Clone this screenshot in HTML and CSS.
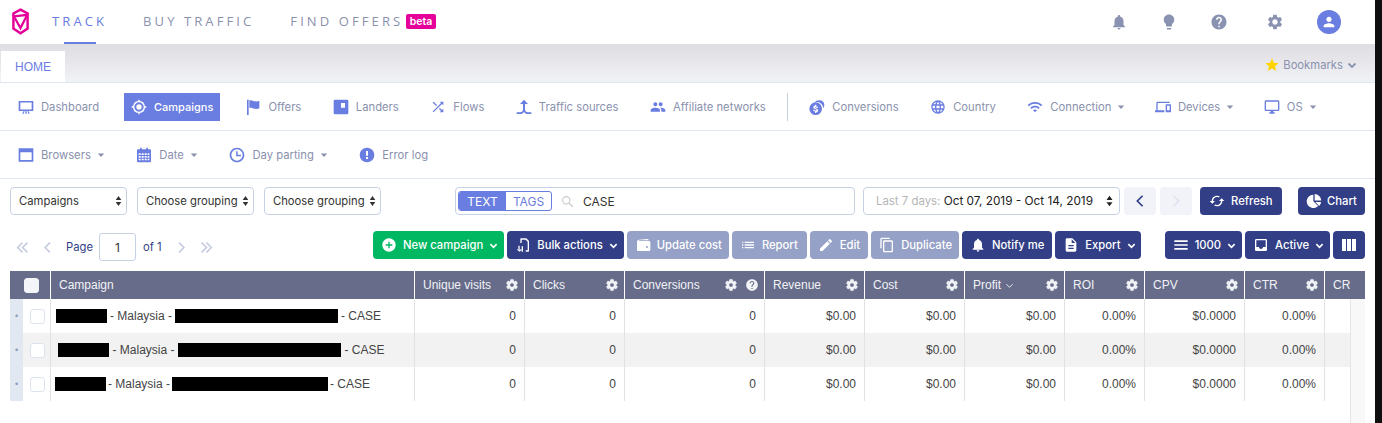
FILE: index.html
```html
<!DOCTYPE html>
<html lang="en">
<head>
<meta charset="utf-8">
<title>Campaigns</title>
<link rel="stylesheet" href="styles.css">
</head>
<body>
<svg class="sprite" width="0" height="0" aria-hidden="true">
<symbol id="i-gear" viewBox="0 0 24 24"><path d="M19.14 12.94c.04-.3.06-.61.06-.94 0-.32-.02-.64-.07-.94l2.03-1.58c.18-.14.23-.41.12-.61l-1.92-3.32c-.12-.22-.37-.29-.59-.22l-2.39.96c-.5-.38-1.03-.7-1.62-.94l-.36-2.54c-.04-.24-.24-.41-.48-.41h-3.84c-.24 0-.43.17-.47.41l-.36 2.54c-.59.24-1.13.57-1.62.94l-2.39-.96c-.22-.08-.47 0-.59.22L2.74 8.87c-.12.21-.08.47.12.61l2.03 1.58c-.05.3-.09.63-.09.94s.02.64.07.94l-2.03 1.58c-.18.14-.23.41-.12.61l1.92 3.32c.12.22.37.29.59.22l2.39-.96c.5.38 1.03.7 1.62.94l.36 2.54c.05.24.24.41.48.41h3.84c.24 0 .44-.17.47-.41l.36-2.54c.59-.24 1.13-.56 1.62-.94l2.39.96c.22.08.47 0 .59-.22l1.92-3.32c.12-.22.07-.47-.12-.61l-2.01-1.58zM12 15.6c-1.98 0-3.6-1.62-3.6-3.6s1.62-3.6 3.6-3.6 3.6 1.62 3.6 3.6-1.62 3.6-3.6 3.6z"/></symbol>
<symbol id="i-bell" viewBox="0 0 24 24"><path d="M12 22c1.1 0 2-.9 2-2h-4c0 1.1.89 2 2 2zm6-6v-5c0-3.07-1.64-5.64-4.5-6.32V4c0-.83-.67-1.5-1.5-1.5s-1.5.67-1.5 1.5v.68C7.63 5.36 6 7.92 6 11v5l-2 2v1h16v-1l-2-2z"/></symbol>
<symbol id="i-help" viewBox="0 0 24 24"><path d="M12 2C6.48 2 2 6.48 2 12s4.48 10 10 10 10-4.48 10-10S17.52 2 12 2zm1 17h-2v-2h2v2zm2.07-7.75l-.9.92C13.45 12.9 13 13.5 13 15h-2v-.5c0-1.1.45-2.1 1.17-2.83l1.24-1.26c.37-.36.59-.86.59-1.41 0-1.1-.9-2-2-2s-2 .9-2 2H8c0-2.21 1.79-4 4-4s4 1.79 4 4c0 .88-.36 1.68-.93 2.25z"/></symbol>
<symbol id="i-caret" viewBox="0 0 10 10"><path d="M1 3h8L5 7.500z"/></symbol>
<symbol id="i-chev" viewBox="0 0 10 10"><path d="M1.500 3.500L5 7l3.500-3.500" fill="none" stroke="currentColor" stroke-width="1.800"/></symbol>
<symbol id="i-updown" viewBox="0 0 10 16"><path d="M5 1l4 5.500H1zM5 15L1 9.500h8z"/></symbol>
</svg>
<div class="page">
<main class="main">
  <header class="topbar">
    <svg class="logo" viewBox="0 0 18 28"><path d="M9 1.500L16.500 5.500V21.500L9 26.500L1.500 21.500V5.500Z" fill="none" stroke="#e5009a" stroke-width="2.600"/><path d="M2 8.500L16 7L9 21Z" fill="none" stroke="#e5009a" stroke-width="2.400"/></svg>
    <nav class="topnav">
      <a class="topnav-item is-active">TRACK</a>
      <a class="topnav-item">BUY TRAFFIC</a>
      <a class="topnav-item">FIND OFFERS<span class="beta">beta</span></a>
    </nav>
    <div class="top-icons">
      <svg class="top-icon"><use href="#i-bell"/></svg>
      <svg class="top-icon" viewBox="0 0 24 24"><path d="M9 21c0 .55.45 1 1 1h4c.55 0 1-.45 1-1v-1H9v1zm3-19C8.140 2 5 5.140 5 9c0 2.380 1.190 4.470 3 5.740V17c0 .55.45 1 1 1h6c.55 0 1-.45 1-1v-2.260c1.810-1.270 3-3.360 3-5.740 0-3.860-3.140-7-7-7z"/></svg>
      <svg class="top-icon top-icon-wide"><use href="#i-help"/></svg>
      <svg class="top-icon"><use href="#i-gear"/></svg>
      <span class="avatar"><svg viewBox="0 0 24 24"><path d="M12 12c2.210 0 4-1.790 4-4s-1.790-4-4-4-4 1.790-4 4 1.790 4 4 4zm0 2c-2.670 0-8 1.340-8 4v2h16v-2c0-2.660-5.330-4-8-4z"/></svg></span>
    </div>
  </header>

  <div class="tabbar">
    <div class="tab">HOME</div>
    <div class="bookmarks">
      <svg class="star" viewBox="0 0 24 24"><path d="M12 17.270L18.180 21l-1.640-7.030L22 9.240l-7.190-.61L12 2 9.190 8.630 2 9.240l5.460 4.730L5.820 21z"/></svg>
      <span>Bookmarks</span>
      <svg class="bm-chev"><use href="#i-chev"/></svg>
    </div>
  </div>

  <nav class="menu-row">
    <a class="menu-item menu-first"><svg class="mi" viewBox="0 0 24 24"><path d="M1 3h22v15H1zm2.500 2.300v10.400h17V5.300zM8 18.500h2L8.500 22H6.500zM16 18.500h-2l1.500 3.500h2zM11 18.500h2V22h-2z"/></svg>Dashboard</a>
    <a class="menu-item is-current"><svg class="mi" viewBox="0 0 24 24"><path d="M12 8a4 4 0 1 0 0 8 4 4 0 0 0 0-8zm8.940 3A8.994 8.994 0 0 0 13 3.060V1h-2v2.060A8.994 8.994 0 0 0 3.060 11H1v2h2.060A8.994 8.994 0 0 0 11 20.940V23h2v-2.060A8.994 8.994 0 0 0 20.940 13H23v-2h-2.060zM12 19a7 7 0 1 1 0-14 7 7 0 0 1 0 14z"/></svg>Campaigns</a>
    <a class="menu-item"><svg class="mi" viewBox="0 0 24 24"><path d="M3 1h2.500v23H3zM6.500 2C10 1 12 3 15 3.500c2.500.4 4.500 0 6.500-.8V14c-2 1-4.500 1.300-7 .8-3-.6-5-2.300-8-1.300z"/></svg>Offers</a>
    <a class="menu-item"><svg class="mi" viewBox="0 0 24 24"><path fill-rule="evenodd" d="M3 1h18a2 2 0 0 1 2 2v18a2 2 0 0 1-2 2H3a2 2 0 0 1-2-2V3a2 2 0 0 1 2-2zm9 5v7h6V6z"/></svg>Landers</a>
    <a class="menu-item"><svg class="mi" viewBox="0 0 24 24"><path d="M10.590 9.170L5.410 4 4 5.410l5.170 5.170 1.420-1.410zM14.500 4l2.040 2.040L4 18.590 5.410 20 17.960 7.460 20 9.500V4h-5.500zm.33 9.410l-1.410 1.410 3.130 3.130L14.500 20H20v-5.500l-2.040 2.040-3.130-3.130z"/></svg>Flows</a>
    <a class="menu-item"><svg class="mi" viewBox="0 0 24 24"><path d="M12 1l6 6.500h-4.500V15c0 3 2 5 4.500 5H23v2.500h-5c-2.500 0-5-1.500-6-3.500-1 2-3.500 3.500-6 3.500H1V20h5.500c2.500 0 4-2 4-5V7.500H6z"/></svg>Traffic sources</a>
    <a class="menu-item"><svg class="mi" viewBox="0 0 24 24"><path d="M16 11c1.660 0 2.990-1.340 2.990-3S17.660 5 16 5c-1.660 0-3 1.340-3 3s1.340 3 3 3zm-8 0c1.660 0 2.990-1.340 2.990-3S9.660 5 8 5C6.340 5 5 6.340 5 8s1.340 3 3 3zm0 2c-2.330 0-7 1.170-7 3.500V19h14v-2.500c0-2.330-4.670-3.500-7-3.500zm8 0c-.29 0-.62.02-.97.05 1.160.84 1.970 1.970 1.970 3.450V19h6v-2.500c0-2.330-4.670-3.500-7-3.500z"/></svg>Affiliate networks</a>
    <span class="menu-divider"></span>
    <a class="menu-item"><svg class="mi" viewBox="0 0 24 24"><path d="M15 2a9 9 0 0 0-7 3.400A9 9 0 0 1 21 14a9 9 0 0 0 2-5.500A7 7 0 0 0 15 2z"/><path fill-rule="evenodd" d="M10 5a9.500 9.500 0 1 1 0 19 9.500 9.500 0 0 1 0-19zm-.8 3.500v1.300c-1.700.3-2.700 1.300-2.700 2.600 0 1.600 1.300 2.200 3 2.700 1.300.4 1.800.7 1.800 1.300s-.6 1-1.500 1-1.600-.4-1.700-1.200H6.300c.1 1.500 1.200 2.400 2.900 2.700V21h1.700v-1.100c1.700-.3 2.800-1.300 2.800-2.700 0-1.700-1.300-2.300-3-2.800-1.300-.4-1.800-.6-1.800-1.200 0-.5.5-.9 1.300-.9.900 0 1.400.4 1.500 1.100h1.800c-.1-1.400-1-2.300-2.600-2.600V8.500z"/></svg>Conversions</a>
    <a class="menu-item"><svg class="mi" viewBox="0 0 24 24"><path d="M11.990 2C6.470 2 2 6.480 2 12s4.470 10 9.990 10C17.520 22 22 17.520 22 12S17.520 2 11.990 2zm6.930 6h-2.950c-.32-1.250-.78-2.450-1.380-3.560 1.840.63 3.370 1.910 4.330 3.560zM12 4.040c.83 1.200 1.480 2.530 1.910 3.960h-3.820c.43-1.430 1.080-2.760 1.910-3.960zM4.260 14C4.100 13.360 4 12.690 4 12s.1-1.360.26-2h3.380c-.08.66-.14 1.320-.14 2 0 .68.06 1.340.14 2H4.260zm.82 2h2.950c.32 1.250.78 2.450 1.380 3.560-1.840-.63-3.370-1.900-4.330-3.560zm2.950-8H5.080c.96-1.660 2.490-2.930 4.330-3.560C8.810 5.550 8.350 6.750 8.030 8zM12 19.960c-.83-1.200-1.480-2.530-1.910-3.960h3.820c-.43 1.430-1.080 2.760-1.910 3.960zM14.340 14H9.660c-.09-.66-.16-1.320-.16-2 0-.68.07-1.350.16-2h4.680c.09.65.16 1.320.16 2 0 .68-.07 1.340-.16 2zm.25 5.560c.6-1.110 1.060-2.310 1.380-3.560h2.950c-.96 1.650-2.490 2.930-4.330 3.560zM16.360 14c.08-.66.14-1.320.14-2 0-.68-.06-1.340-.14-2h3.380c.16.64.26 1.310.26 2s-.1 1.360-.26 2h-3.380z"/></svg>Country</a>
    <a class="menu-item has-caret"><svg class="mi" viewBox="0 0 24 24"><path d="M1 9l2 2c4.970-4.970 13.030-4.970 18 0l2-2C16.930 2.930 7.080 2.930 1 9zm8 8l3 3 3-3c-1.650-1.660-4.340-1.660-6 0zm-4-4l2 2c2.760-2.760 7.240-2.760 10 0l2-2C15.140 9.140 8.870 9.140 5 13z"/></svg>Connection<svg class="caret"><use href="#i-caret"/></svg></a>
    <a class="menu-item has-caret"><svg class="mi" viewBox="0 0 24 24"><path d="M4 6h18V4H4c-1.100 0-2 .9-2 2v11H0v3h14v-3H4V6zm19 2h-6c-.55 0-1 .45-1 1v10c0 .55.45 1 1 1h6c.55 0 1-.45 1-1V9c0-.55-.45-1-1-1zm-1 9h-4v-7h4v7z"/></svg>Devices<svg class="caret"><use href="#i-caret"/></svg></a>
    <a class="menu-item has-caret"><svg class="mi" viewBox="0 0 24 24"><path d="M21 2H3c-1.100 0-2 .9-2 2v12c0 1.100.9 2 2 2h7v2H8v2h8v-2h-2v-2h7c1.100 0 2-.9 2-2V4c0-1.100-.9-2-2-2zm0 14H3V4h18v12z"/></svg>OS<svg class="caret"><use href="#i-caret"/></svg></a>
  </nav>

  <nav class="menu-row menu-row-second">
    <a class="menu-item has-caret"><svg class="mi" viewBox="0 0 24 24"><path fill-rule="evenodd" d="M1 2h22v20H1zm2.500 6v11.500h17V8z"/></svg>Browsers<svg class="caret"><use href="#i-caret"/></svg></a>
    <a class="menu-item has-caret"><svg class="mi" viewBox="0 0 24 24"><path fill-rule="evenodd" d="M6 1h2.500v2.500h7V1H18v2.500h3a1.500 1.500 0 0 1 1.500 1.500v16.500A1.500 1.500 0 0 1 21 23H3a1.500 1.500 0 0 1-1.500-1.500V5A1.500 1.500 0 0 1 3 3.500h3zM4 9.500V12h3V9.500zm4.500 0V12h3V9.500zm4.500 0V12h3V9.500zm4.500 0V12H20V9.500zM4 13.500V16h3v-2.500zm4.500 0V16h3v-2.500zm4.500 0V16h3v-2.500zm4.500 0V16H20v-2.500zM4 17.500V20h3v-2.500zm4.500 0V20h3v-2.500zm4.500 0V20h3v-2.500zm4.500 0V20H20v-2.500z"/></svg>Date<svg class="caret"><use href="#i-caret"/></svg></a>
    <a class="menu-item has-caret"><svg class="mi" viewBox="0 0 24 24"><path d="M11.990 1C5.900 1 1 5.920 1 12s4.900 11 10.990 11C18.070 23 23 18.080 23 12S18.070 1 11.990 1zM12 20.500a8.500 8.500 0 1 1 0-17 8.500 8.500 0 0 1 0 17zM13 6.500h-2.300V14H18v-2.300h-5z"/></svg>Day parting<svg class="caret"><use href="#i-caret"/></svg></a>
    <a class="menu-item"><svg class="mi" viewBox="0 0 24 24"><path d="M12 1a11 11 0 1 0 0 22 11 11 0 0 0 0-22zm1.500 17h-3v-3h3zm0-5h-3V6h3z"/></svg>Error log</a>
  </nav>

  <div class="filters">
    <div class="select select-main">Campaigns<svg class="updown"><use href="#i-updown"/></svg></div>
    <div class="select">Choose grouping<svg class="updown"><use href="#i-updown"/></svg></div>
    <div class="select">Choose grouping<svg class="updown"><use href="#i-updown"/></svg></div>
    <div class="search">
      <div class="toggle"><span class="toggle-on">TEXT</span><span class="toggle-off">TAGS</span></div>
      <svg class="search-icon" viewBox="0 0 16 16"><circle cx="6.500" cy="6.500" r="4.500" fill="none" stroke="#c8c8c8" stroke-width="1.300"/><path d="M10 10l4.500 4.500" stroke="#c8c8c8" stroke-width="1.600"/></svg>
      <span class="search-text">CASE</span>
    </div>
    <div class="daterange"><span class="muted">Last 7 days:</span> Oct 07, 2019 - Oct 14, 2019<svg class="updown dark"><use href="#i-updown"/></svg></div>
    <button class="arrow"><svg viewBox="0 0 12 16"><path d="M9 2L3 8l6 6" fill="none" stroke="#323f87" stroke-width="2"/></svg></button>
    <button class="arrow"><svg viewBox="0 0 12 16"><path d="M3 2l6 6-6 6" fill="none" stroke="#dfe3ef" stroke-width="2"/></svg></button>
    <button class="btn btn-refresh"><svg class="bi" viewBox="0 0 24 24"><path d="M19 8l-4 4h3c0 3.310-2.690 6-6 6-1.010 0-1.970-.25-2.800-.7l-1.460 1.460C8.970 19.540 10.430 20 12 20c4.420 0 8-3.580 8-8h3l-4-4zM6 12c0-3.310 2.690-6 6-6 1.010 0 1.970.25 2.800.7l1.460-1.460C15.030 4.460 13.570 4 12 4c-4.420 0-8 3.580-8 8H1l4 4 4-4H6z"/></svg>Refresh</button>
    <button class="btn btn-chart"><svg class="bi" viewBox="0 0 24 24"><path d="M11 2.500v10l7.200 7A10 10 0 1 1 11 2.500zM13 1.500a10 10 0 0 1 9.800 9.800H13zM14 13.500h8.700a10 10 0 0 1-3 6.100z"/></svg>Chart</button>
  </div>

  <div class="actions">
    <div class="pager">
      <svg class="pg" viewBox="0 0 16 16"><path d="M8 2L2 8l6 6M14 2L8 8l6 6" fill="none" stroke="#c3c9e0" stroke-width="1.800"/></svg>
      <svg class="pg pg-one" viewBox="0 0 16 16"><path d="M11 2L5 8l6 6" fill="none" stroke="#c3c9e0" stroke-width="1.800"/></svg>
      <span class="pg-label">Page</span>
      <span class="pg-input">1</span>
      <span class="pg-label">of 1</span>
      <svg class="pg pg-next" viewBox="0 0 16 16"><path d="M5 2l6 6-6 6" fill="none" stroke="#c3c9e0" stroke-width="1.800"/></svg>
      <svg class="pg pg-last" viewBox="0 0 16 16"><path d="M2 2l6 6-6 6M8 2l6 6-6 6" fill="none" stroke="#c3c9e0" stroke-width="1.800"/></svg>
    </div>
    <div class="btn-group">
      <button class="btn btn-green"><svg class="bi" viewBox="0 0 24 24"><path d="M12 2C6.480 2 2 6.480 2 12s4.480 10 10 10 10-4.480 10-10S17.520 2 12 2zm5 11h-4v4h-2v-4H7v-2h4V7h2v4h4v2z"/></svg>New campaign<svg class="chev"><use href="#i-chev"/></svg></button>
      <button class="btn"><svg class="bi" viewBox="0 0 24 24"><path d="M9 2h8l4 4v15a1 1 0 0 1-1 1h-4v-2h3V7l-3-3H10v5H8V3a1 1 0 0 1 1-1zM5 13h2v7l2-2 1 1-3 3-4-3 1-1 1 2zM10 14h2v8h-2z"/></svg>Bulk actions<svg class="chev"><use href="#i-chev"/></svg></button>
      <button class="btn btn-off btn-tight"><svg class="bi" viewBox="0 0 24 24"><path d="M3 7.500C3 5.500 4.500 4.500 6 4.300L18 3c1.500-.1 2.500.7 2.600 2H6.500c-.8 0-.8 1 0 1H21c1.100 0 2 .9 2 2v11c0 1.100-.9 2-2 2H5c-1.100 0-2-.9-2-2zM18 13.500a1.500 1.500 0 1 0 0 3 1.500 1.500 0 0 0 0-3z"/></svg>Update cost</button>
      <button class="btn btn-off btn-loose"><svg class="bi" viewBox="0 0 24 24"><path d="M3 13h2v-2H3v2zm0 4h2v-2H3v2zm0-8h2V7H3v2zm4 4h14v-2H7v2zm0 4h14v-2H7v2zM7 7v2h14V7H7z"/></svg>Report</button>
      <button class="btn btn-off"><svg class="bi" viewBox="0 0 24 24"><path d="M3 17.250V21h3.750L17.810 9.940l-3.750-3.750L3 17.250zM20.710 7.040c.39-.39.39-1.020 0-1.410l-2.340-2.340c-.39-.39-1.020-.39-1.410 0l-1.830 1.830 3.750 3.750 1.830-1.830z"/></svg>Edit</button>
      <button class="btn btn-off btn-tight"><svg class="bi" viewBox="0 0 24 24"><path d="M16 1H4c-1.100 0-2 .9-2 2v14h2V3h12V1zm3 4H8c-1.100 0-2 .9-2 2v14c0 1.100.9 2 2 2h11c1.100 0 2-.9 2-2V7c0-1.100-.9-2-2-2zm0 16H8V7h11v14z"/></svg>Duplicate</button>
      <button class="btn"><svg class="bi" viewBox="0 0 24 24"><use href="#i-bell"/></svg>Notify me</button>
      <button class="btn btn-tight"><svg class="bi" viewBox="0 0 24 24"><path d="M14 2H6c-1.100 0-1.990.9-1.990 2L4 20c0 1.100.89 2 1.990 2H18c1.100 0 2-.9 2-2V8l-6-6zm2 16H8v-2h8v2zm0-4H8v-2h8v2zm-3-5V3.500L18.500 9H13z"/></svg>Export<svg class="chev"><use href="#i-chev"/></svg></button>
    </div>
    <div class="btn-group btn-group-right">
      <button class="btn"><svg class="bi" viewBox="0 0 24 24"><path d="M2 19h20v-2.400H2zm0-5.800h20v-2.400H2zM2 5v2.400h20V5z"/></svg>1000<svg class="chev"><use href="#i-chev"/></svg></button>
      <button class="btn"><svg class="bi" viewBox="0 0 24 24"><path d="M19 3H4.990c-1.110 0-1.980.89-1.980 2L3 19c0 1.100.88 2 1.990 2H19c1.100 0 2-.9 2-2V5c0-1.110-.9-2-2-2zm0 12h-4c0 1.660-1.350 3-3 3s-3-1.340-3-3H4.990V5H19v10z"/></svg>Active<svg class="chev"><use href="#i-chev"/></svg></button>
      <button class="btn btn-cols"><svg class="bi" viewBox="0 0 16 16"><path d="M1 2h4v12H1zM6 2h4v12H6zM11 2h4v12h-4z"/></svg></button>
    </div>
  </div>

  <section class="table">
    <div class="thead">
      <div class="th th-drag"></div>
      <div class="th th-check"><span class="box box-head"></span></div>
      <div class="th"><span>Campaign</span></div>
      <div class="th"><span>Unique visits</span><svg class="gear"><use href="#i-gear"/></svg></div>
      <div class="th"><span>Clicks</span><svg class="gear"><use href="#i-gear"/></svg></div>
      <div class="th"><span>Conversions</span><svg class="gear"><use href="#i-gear"/></svg><svg class="gear help"><use href="#i-help"/></svg></div>
      <div class="th"><span>Revenue</span><svg class="gear"><use href="#i-gear"/></svg></div>
      <div class="th"><span>Cost</span><svg class="gear"><use href="#i-gear"/></svg></div>
      <div class="th"><span>Profit<svg class="sort" viewBox="0 0 10 10"><path d="M1.500 3.500L5 7l3.500-3.500" fill="none" stroke="currentColor"/></svg></span><svg class="gear"><use href="#i-gear"/></svg></div>
      <div class="th"><span>ROI</span><svg class="gear"><use href="#i-gear"/></svg></div>
      <div class="th"><span>CPV</span><svg class="gear"><use href="#i-gear"/></svg></div>
      <div class="th"><span>CTR</span><svg class="gear"><use href="#i-gear"/></svg></div>
      <div class="th"><span>CR</span></div>
    </div>
    <div class="tbody">
      <div class="rows">
        <div class="tr">
          <div class="td td-drag">•</div>
          <div class="td td-check"><span class="box"></span></div>
          <div class="td td-name name-a"><span class="redact w51"></span><span>- Malaysia -</span><span class="redact w163"></span><span>- CASE</span></div>
          <div class="td">0</div><div class="td">0</div><div class="td">0</div><div class="td">$0.00</div><div class="td">$0.00</div><div class="td">$0.00</div><div class="td">0.00%</div><div class="td">$0.0000</div><div class="td">0.00%</div><div class="td"></div>
        </div>
        <div class="tr tr-alt">
          <div class="td td-drag">•</div>
          <div class="td td-check"><span class="box"></span></div>
          <div class="td td-name name-b"><span class="redact w51"></span><span>- Malaysia -</span><span class="redact w163"></span><span>- CASE</span></div>
          <div class="td">0</div><div class="td">0</div><div class="td">0</div><div class="td">$0.00</div><div class="td">$0.00</div><div class="td">$0.00</div><div class="td">0.00%</div><div class="td">$0.0000</div><div class="td">0.00%</div><div class="td"></div>
        </div>
        <div class="tr">
          <div class="td td-drag">•</div>
          <div class="td td-check"><span class="box"></span></div>
          <div class="td td-name name-c"><span class="redact w51"></span><span>- Malaysia -</span><span class="redact w156"></span><span>- CASE</span></div>
          <div class="td">0</div><div class="td">0</div><div class="td">0</div><div class="td">$0.00</div><div class="td">$0.00</div><div class="td">$0.00</div><div class="td">0.00%</div><div class="td">$0.0000</div><div class="td">0.00%</div><div class="td"></div>
        </div>
      </div>
      <div class="track"></div>
    </div>
  </section>
</main>
<div class="edge"></div>
</div>
</body>
</html>
```

FILE: styles.css
```css
* { box-sizing: border-box; }
html, body { margin: 0; height: 423px; overflow: hidden; background: #fff; }
body { font-family: Inter, "Noto Sans", sans-serif; font-size: 11.25px; color: #333; }
.sprite { position: absolute; }
svg { display: block; flex: none; }
.page { display: flex; height: 423px; }
.main { flex: 1; min-width: 0; display: flex; flex-direction: column; }
.edge { width: 7px; background: #0f0f10; }

/* top bar */
.topbar { height: 44px; display: flex; align-items: center; padding: 0 34px 0 12px; flex: none; }
.logo { width: 17px; height: 27px; fill: none; margin-top: -1px; }
.topnav { display: flex; margin-left: 23px; }
.topnav-item { position: relative; margin-right: 36px; padding-bottom: 2px; font-family: "Open Sans", sans-serif; font-size: 13px; letter-spacing: 3.1px; color: #8a91ad; line-height: 42px; display: flex; align-items: center; }
.topnav-item.is-active { color: #6a7de0; }
.topnav-item.is-active::after { content: ""; position: absolute; left: 12px; width: 32px; bottom: 0; height: 2px; background: #6a7de0; }
.beta { margin-left: 3px; background: #e5009a; color: #fff; font-family: Inter, sans-serif; font-weight: 600; font-size: 10.5px; letter-spacing: 0; line-height: 15px; padding: 0 3.5px; border-radius: 2px; }
.top-icons { margin-left: auto; display: flex; align-items: center; }
.top-icon { width: 18px; height: 18px; fill: #8a92b2; margin-right: 32px; }
.top-icon-wide { margin-right: 38px; }
.avatar { width: 24px; height: 24px; border-radius: 50%; background: #6a7de0; display: flex; align-items: center; justify-content: center; margin-left: 1px; }
.avatar svg { width: 16px; height: 16px; fill: #fff; }

/* tab bar */
.tabbar { height: 39px; flex: none; display: flex; align-items: flex-end; padding-left: 1px; padding-right: 18px; background: linear-gradient(#dedee2, #f1f2f6); border-bottom: 1px solid #dfe5f1; }
.tab { width: 64px; height: 31px; background: #fff; color: #6a7de0; font-family: "Liberation Sans", sans-serif; font-size: 12px; display: flex; align-items: center; justify-content: center; }
.bookmarks { margin-left: auto; align-self: center; display: flex; align-items: center; color: #8a91ad; font-family: Inter, sans-serif; font-size: 11.25px; margin-top: 4px; }
.star { width: 16px; height: 16px; fill: #ffd400; margin-right: 3px; margin-top: -1px; }
.bm-chev { width: 10px; height: 10px; margin-left: 4px; color: #8a91ad; }

/* menu */
.menu-row { height: 48px; flex: none; display: flex; align-items: center; padding: 1px 0 0 10px; border-bottom: 1px solid #dfe5f1; }
.menu-item { display: flex; align-items: center; height: 28px; padding: 0 8px; margin-right: 15.5px; color: #8a91ad; font-size: 11.25px; white-space: nowrap; }
.has-caret { padding-right: 6px; }
.mi { width: 16px; height: 16px; fill: #6a7de0; margin-right: 7px; }
.menu-first { margin-right: 17px; }
.menu-item.is-current { background: #6a7de0; color: #fff; font-weight: 500; font-size: 11px; padding: 0 7px; margin-right: 17px; }
.menu-item.is-current .mi { fill: #fff; }
.caret { width: 8px; height: 8px; fill: #8a91ad; margin-left: 6px; }
.menu-divider { width: 1px; height: 28px; flex: none; background: #c6cee0; margin: 0 13px 0 -2px; }
.menu-row-second .menu-item { margin-right: 16.5px; padding-right: 7px; }

/* filters */
.filters { height: 52px; flex: none; display: flex; align-items: flex-start; padding: 8px 0 0 10px; }
.select { width: 117px; height: 28px; margin-right: 10px; border: 1px solid #c6d2e4; border-radius: 4px; padding: 0 4px 0 8px; display: flex; align-items: center; justify-content: space-between; font-family: Inter, sans-serif; font-size: 11.25px; color: #333; white-space: nowrap; }
.updown { width: 7px; height: 12px; fill: #333; }
.search { width: 400px; height: 28px; margin-left: 64px; margin-right: 8px; border: 1px solid #c6d2e4; border-radius: 4px; display: flex; align-items: center; padding-left: 2px; }
.toggle { width: 94px; height: 20px; border: 1px solid #6a7de0; border-radius: 3px; display: flex; font-family: Inter, sans-serif; font-size: 12px; overflow: hidden; }
.toggle-on { width: 47px; background: #6a7de0; color: #fff; display: flex; align-items: center; justify-content: center; }
.toggle-off { flex: 1; color: #6a7de0; display: flex; align-items: center; justify-content: center; }
.search-icon { width: 13px; height: 13px; margin-left: 9px; }
.search-text { margin-left: 9px; color: #333; font-size: 12px; }
.daterange { width: 257px; height: 28px; border: 1px solid #c6d2e4; border-radius: 4px; display: flex; align-items: center; padding: 0 5px 0 12px; font-size: 11.8px; color: #222; white-space: pre; }
.muted { color: #b5b5b5; font-size: 11.4px; }
.updown.dark { width: 9px; height: 12px; margin-left: auto; fill: #222; }
.arrow { width: 32px; height: 28px; margin-left: 4px; background: #f1f3f9; border: 0; border-radius: 4px; padding: 0; display: flex; align-items: center; justify-content: center; }
.arrow svg { width: 12px; height: 14px; }
.btn { height: 28px; border: 0; border-radius: 4px; background: #323f87; color: #fff; font-family: Inter, sans-serif; font-size: 11.25px; font-weight: 500; display: flex; align-items: center; padding: 0 8px 0 9px; white-space: nowrap; }
.bi { width: 16px; height: 16px; fill: currentColor; margin: 0 6px 0 -1px; }
.chev { width: 9px; height: 9px; margin: 0 -2px 0 6px; }
.btn-tight { padding-right: 7px; }
.btn-loose { padding-right: 9px; }
.btn-refresh { width: 82px; margin-left: 8px; padding-left: 10px; }
.btn-chart { width: 67px; margin-left: 16px; }
.btn-chart .bi { margin-right: 5px; }

/* actions */
.actions { height: 40px; flex: none; display: flex; align-items: flex-start; padding-right: 10px; }
.pager { width: 373px; display: flex; align-items: center; padding-left: 16px; height: 32px; color: #323f87; }
.pg { width: 13px; height: 13px; }
.pg-one { margin-left: 12px; }
.pg-label { font-size: 11.25px; }
.pg-one + .pg-label { margin-left: 12px; }
.pg-input { width: 37px; height: 28px; margin: 0 7px 0 6px; border: 1px solid #c6d2e4; border-radius: 3px; display: flex; align-items: center; justify-content: center; color: #333; font-size: 12px; }
.pg-next { margin-left: 13px; }
.pg-last { margin-left: 12px; }
.btn-group { display: flex; gap: 3px; }
.btn-group-right { margin-left: auto; }
.btn-green { background: #00b862; }
.btn-off { background: #95a1c6; }
.btn-cols { padding: 0 9px; }
.btn-cols .bi { margin: 0 -1px; }

/* table */
.table { flex: 1; min-height: 0; display: flex; flex-direction: column; margin: 0 10px; font-family: "Liberation Sans", sans-serif; font-size: 12px; }
.thead, .tr { display: grid; grid-template-columns: 13px 27px 364px 110px 100px 140px 100px 100px 100px 80px 100px 80px 41px; }
.thead { height: 28px; flex: none; background: #666c8a; }
.th { display: flex; align-items: center; padding: 0 5px 0 8px; color: #f2f3f7; border-left: 1px solid #fff; gap: 7px; }
.th span { display: flex; align-items: center; margin-right: auto; }
.th-drag, .th-check { border-left: 0; padding: 0; }
.th-check { justify-content: center; padding-left: 1px; }
.gear { width: 14px; height: 14px; fill: #f2f3f7; stroke: #f2f3f7; stroke-width: 1px; }
.help { stroke: none; }
.sort { width: 9px; height: 9px; margin-left: 4px; }
.box { width: 15px; height: 15px; border: 1px solid #dde3ee; border-radius: 3px; background: #fff; }
.box-head { background: #f4f5f8; border-color: #f4f5f8; }
.tbody { flex: 1; min-height: 0; display: flex; }
.rows { flex: 1; min-width: 0; }
.tr { height: 34px; grid-template-columns: 13px 27px 364px 110px 100px 140px 100px 100px 100px 80px 100px 80px 26px; }
.tr-alt { background: #f2f2f2; }
.td { display: flex; align-items: center; justify-content: flex-end; padding: 0 8px; border-left: 1px solid #e2e2e2; color: #444; white-space: nowrap; }
.td-drag { background: #e2e8f2; border-left: 0; padding: 0; justify-content: center; color: #8c9ab8; font-size: 9px; }
.td-check { border-left: 0; padding: 0 0 0 1px; justify-content: center; }
.td-name { justify-content: flex-start; padding: 0; gap: 3px; }
.name-a { padding-left: 5px; }
.name-b { padding-left: 7px; gap: 3.5px; }
.name-c { padding-left: 4px; gap: 2px; }
.redact { height: 14px; background: #000; }
.w51 { width: 51px; }
.w156 { width: 156px; }
.w163 { width: 163px; }
.track { width: 15px; flex: none; background: #f8f8f8; border-left: 1px solid #e6e6e6; }
```
